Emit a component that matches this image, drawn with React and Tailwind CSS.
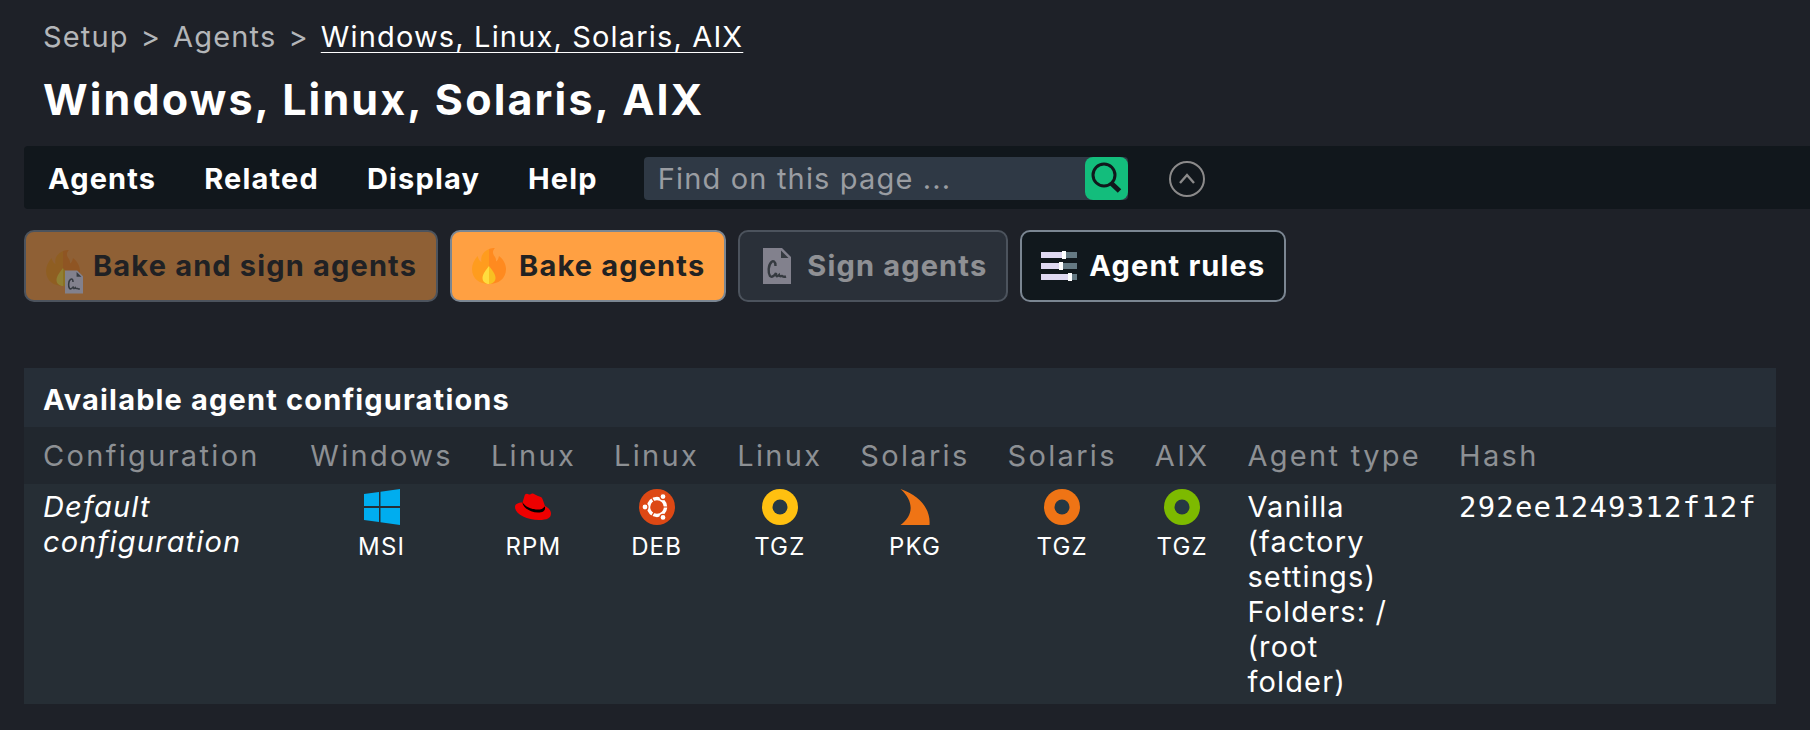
import React from 'react';
import clsx from 'clsx';

const Flame = ({ className }) => (
  <svg viewBox="0 0 36 36" className={className} aria-hidden="true">
    <path d="M18 1C13 3 9 8 10.500 14C8 13 7.500 10 6.500 8C3 12 1 17 1 21C1 31 9 36 18 36Z" fill="#ff9c1e" />
    <path d="M24 0C21 3 21.500 6 24 9C25 10.500 25 12 25 13.500C27 12.500 27.500 10 28 8C32 11 35 16 35 21C35 31 27 36 18 36V1C20 0 22 0 24 0Z" fill="#ff8a1f" />
    <path d="M18 18C15 22 11.500 26 11.500 30C11.500 33.500 14.500 36 18 36Z" fill="#ffdc3e" />
    <path d="M18 18C21 22 24.500 26 24.500 30C24.500 33.500 21.500 36 18 36Z" fill="#f8c022" />
  </svg>
);

const SignedFile = ({ className }) => (
  <svg viewBox="0 0 28 36" className={className} aria-hidden="true">
    <path d="M0 0H19L28 9V36H0Z" fill="#e6e0f2" />
    <path d="M18 2.500L25.500 10H18Z" fill="#4c5358" />
    <path d="M12.500 18C12.500 13 10 12.500 8.500 14C5 17 5 25 7 28C9 30 12 27 13 25C13 29 14 29 16 27C16.500 29 17.500 28 19 28C20.500 29 21.500 29 23 28.500" fill="none" stroke="#4c5358" strokeWidth="2.400" />
  </svg>
);

const BakeAndSign = () => (
  <span className="relative flex h-10 w-9 shrink-0 items-end">
    <Flame className="size-9" />
    <SignedFile className="absolute -right-0.5 -bottom-2 h-6 w-[18px]" />
  </span>
);

const Sliders = () => (
  <svg viewBox="0 0 36 36" className="size-9" aria-hidden="true">
    <path d="M0 4H36V10H0ZM0 15H36V21H0ZM0 26H36V32H0Z" fill="#657983" />
    <path d="M0 4H22V10H0ZM0 15H18V21H0ZM0 26H27V32H0Z" fill="#e0d9f2" />
    <path d="M21 3H25V11H21ZM18 14H22V22H18ZM27 25H31V33H27Z" fill="#fff" />
  </svg>
);

const WindowsLogo = () => (
  <svg viewBox="0 0 36 36" className="size-9" aria-hidden="true">
    <path d="M0 5L15 3V17H0ZM16.500 2.800L36 0V17H16.500ZM0 19H15V33L0 31ZM16.500 19H36V36L16.500 33.200Z" fill="#00adef" />
  </svg>
);

const RedHatLogo = () => (
  <svg viewBox="0 0 36 36" className="size-9" aria-hidden="true">
    <path d="M7.500 13.500C3 13.500 0 15 0 18C0 25 12 31 24 31C32 31 36 29 36 24.500C36 21 33 18.500 30 17L27.500 10C27 8 25 7.500 23 7L18 4.500C16 4 15.500 6 14 5.500C12 4 10 4.500 9.500 7Z" fill="#ee0000" />
    <path d="M7.500 13C7 18 15 23.500 23 23.500C28 23.500 30.500 22 30 18L29.500 17.500C28 20 26 20.500 23 20.500C16 20.500 9 17 7.500 13Z" fill="#000" />
  </svg>
);

const UbuntuLogo = () => (
  <svg viewBox="0 0 36 36" className="size-9" aria-hidden="true">
    <circle cx="18" cy="18" r="18" fill="#dd4814" />
    <circle cx="18" cy="18" r="8.500" fill="none" stroke="#fff" strokeWidth="3.400" />
    <path d="M18 18L32 18M18 18L11 5.900M18 18L11 30.100" stroke="#dd4814" strokeWidth="1.200" />
    <g fill="#fff" stroke="#dd4814" strokeWidth="1.200">
      <circle cx="6" cy="18" r="3" />
      <circle cx="24" cy="7.600" r="3" />
      <circle cx="24" cy="28.400" r="3" />
    </g>
  </svg>
);

const SolarisLogo = () => (
  <svg viewBox="0 0 36 36" className="size-9" aria-hidden="true">
    <path d="M3.500 0C22 6 34 20 32.500 36H3.500C16 27 18 13 3.500 0Z" fill="#ef7415" />
  </svg>
);

const Ring = ({ color }) => (
  <svg viewBox="0 0 36 36" className="size-9" aria-hidden="true">
    <circle cx="18" cy="18" r="18" fill={color} />
    <circle cx="18" cy="18" r="7.500" fill="#263843" />
  </svg>
);

const menuItems = ['Agents', 'Related', 'Display', 'Help'];

const actions = [
  { label: 'Bake and sign agents', icon: <BakeAndSign />, disabled: true, style: 'bg-[#ffa042] text-[#222222]' },
  { label: 'Bake agents', icon: <Flame className="size-9" />, style: 'bg-[#ffa042] text-[#222222]' },
  { label: 'Sign agents', icon: <span className="flex w-9 justify-center"><SignedFile className="h-9 w-7" /></span>, disabled: true, style: 'bg-[#363f4a] text-white' },
  { label: 'Agent rules', icon: <Sliders />, style: 'bg-[#11181d] text-white' },
];

const packages = [
  { os: 'Windows', label: 'MSI', icon: <WindowsLogo /> },
  { os: 'Linux', label: 'RPM', icon: <RedHatLogo /> },
  { os: 'Linux', label: 'DEB', icon: <UbuntuLogo /> },
  { os: 'Linux', label: 'TGZ', icon: <Ring color="#ffc010" /> },
  { os: 'Solaris', label: 'PKG', icon: <SolarisLogo /> },
  { os: 'Solaris', label: 'TGZ', icon: <Ring color="#ef7415" /> },
  { os: 'AIX', label: 'TGZ', icon: <Ring color="#7dba00" /> },
];

const Header = () => (
  <header>
    <nav aria-label="Breadcrumb" className="flex gap-3 pt-[19px] pl-[19px] text-[#b4b6b9]">
      <a href="#setup">Setup</a>
      <span>&gt;</span>
      <a href="#agents">Agents</a>
      <span>&gt;</span>
      <a href="#windows" className="text-white underline decoration-1 underline-offset-[5px]">Windows, Linux, Solaris, AIX</a>
    </nav>
    <h1 className="mt-[19px] pl-[19px] text-[43px] leading-[52px] font-bold tracking-wider text-white">Windows, Linux, Solaris, AIX</h1>
  </header>
);

const MenuBar = () => (
  <div className="mt-[21px] flex h-[63px] items-center rounded-l-sm bg-[#11171c] pt-0.5">
    {menuItems.map((item) => (
      <button key={item} className="px-6 font-bold text-white">{item}</button>
    ))}
    <form className="ml-[22px] flex h-[43px] w-[484px] rounded-[4px] bg-[#2f3945]">
      <input
        type="text"
        aria-label="Find on this page"
        placeholder="Find on this page ..."
        className="min-w-0 flex-1 px-[14px] text-white outline-none placeholder:text-[#9a9da2]"
      />
      <button type="button" aria-label="Search" className="size-[43px] rounded-lg bg-[#13bd7c]">
        <svg viewBox="0 0 43 43" className="size-full" fill="none" stroke="#11171c" aria-hidden="true">
          <circle cx="19" cy="18" r="11" strokeWidth="3" />
          <path d="M26 26L34.500 34" strokeWidth="5" />
        </svg>
      </button>
    </form>
    <button aria-label="Collapse actions" className="ml-[41px] size-9">
      <svg viewBox="0 0 36 36" className="size-9" fill="none" stroke="#8b8a8a" aria-hidden="true">
        <circle cx="18" cy="18" r="17" strokeWidth="2" />
        <path d="M11 22L18 14L25 22" strokeWidth="2.400" />
      </svg>
    </button>
  </div>
);

const App = () => (
  <div className="min-h-screen bg-[#1e2128] pl-6 font-['Inter',sans-serif] text-[29px] leading-[35px] tracking-[0.04em]">
    <Header />
    <MenuBar />
    <div className="mt-[21px] flex gap-3">
      {actions.map(({ label, icon, disabled, style }) => (
        <button
          key={label}
          disabled={disabled}
          className={clsx('flex h-[72px] items-center gap-3 rounded-[10px] border-2 border-[#7b8692] px-[19px] font-bold disabled:opacity-50', style)}
        >
          {icon}
          <span className="pb-0.5">{label}</span>
        </button>
      ))}
    </div>
    <main className="mt-[66px] mr-[34px]">
      <h2 className="bg-[#262e37] px-[19px] pt-[14px] pb-[10px] font-bold text-white">Available agent configurations</h2>
      <table className="w-full bg-[#262e35] text-left text-white">
        <thead className="bg-[#21272e] tracking-[0.08em] whitespace-nowrap text-[#8d9094]">
          <tr className="h-[57px]">
            <th className="px-[19px] font-normal">Configuration</th>
            {packages.map(({ os, label }) => (
              <th key={os + label} className="w-px px-[19px] font-normal">{os}</th>
            ))}
            <th className="w-px px-[19px] font-normal">Agent type</th>
            <th className="w-px px-[19px] font-normal">Hash</th>
          </tr>
        </thead>
        <tbody>
          <tr className="align-top">
            <td className="px-[19px] py-[5px] italic">Default configuration</td>
            {packages.map(({ os, label, icon }) => (
              <td key={os + label} className="py-[5px]">
                <a href={`#${os}-${label}`.toLowerCase()} className="flex flex-col items-center gap-[7px] text-[24px] leading-[29px]">
                  {icon}
                  {label}
                </a>
              </td>
            ))}
            <td className="px-[19px] py-[5px]">
              Vanilla (factory settings)
              <br />
              Folders: / (root folder)
            </td>
            <td className="px-[19px] py-1.5 font-['DejaVu_Sans_Mono',monospace]">292ee1249312f12f</td>
          </tr>
        </tbody>
      </table>
    </main>
  </div>
);

export default App;
